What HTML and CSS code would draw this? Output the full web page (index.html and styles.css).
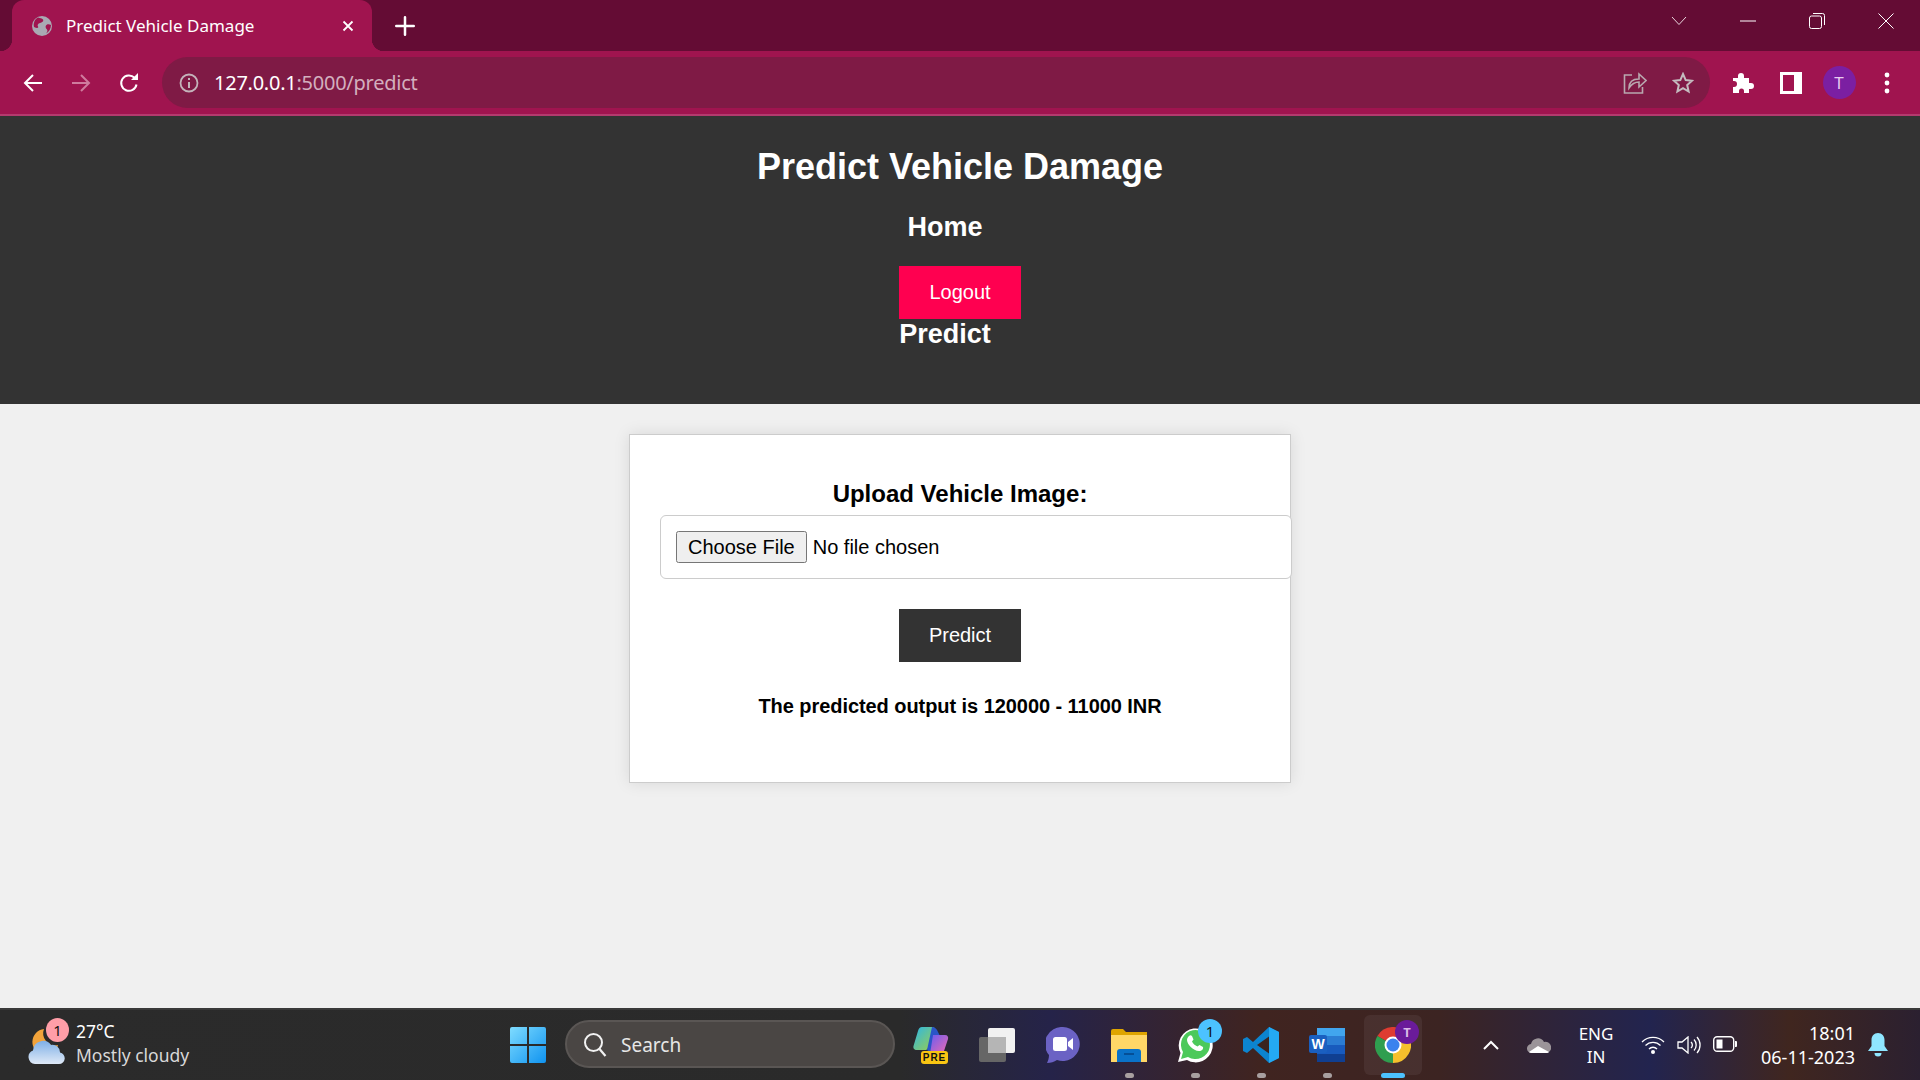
FILE: index.html
```html
<!DOCTYPE html>
<html lang="en">
<head>
    <meta charset="UTF-8">
    <meta name="viewport" content="width=device-width, initial-scale=1.0">
    <title>Predict Vehicle Damage</title>
    <link rel="stylesheet" href="styles.css">
</head>
<body>
    <!-- browser chrome -->
    <div class="tabstrip">
        <div class="tab">
            <svg class="favicon" viewBox="0 0 20 20"><circle cx="10" cy="10" r="10" fill="#a9a9b3"/><path d="M6 1.500c2 1 4 .5 5 2s-1 3-3 3.500-3 2-2 3.500-1 2-4 .5c-1-4 1-8 4-9.500zM19 9c-2-1-4-1-5 .5s0 3 1 4 0 3-1 4c3-1.500 5-5 5-8.500z" fill="#a0144f"/></svg>
            <span class="tab-title">Predict Vehicle Damage</span>
            <svg class="tab-close" viewBox="0 0 12 12"><path d="M1.500 1.500l9 9M10.500 1.500l-9 9" stroke="#fff" stroke-width="1.800"/></svg>
        </div>
        <svg class="new-tab" viewBox="0 0 16 16"><path d="M8 1v14M1 8h14" stroke="#fff" stroke-width="2" stroke-linecap="round"/></svg>
        <div class="window-controls">
            <div class="win-btn"><svg width="16" height="10" viewBox="0 0 16 10"><path d="M1 1l7 7.500L15 1" fill="none" stroke="#e9d5dd"/></svg></div>
            <div class="win-btn"><svg width="16" height="2" viewBox="0 0 16 2"><path d="M0 1h16" stroke="#fff"/></svg></div>
            <div class="win-btn"><svg width="16" height="16" viewBox="0 0 16 16"><rect x=".5" y="3" width="12" height="12.500" rx="2" fill="none" stroke="#fff"/><path d="M4 .5h9.500a2 2 0 0 1 2 2V12" fill="none" stroke="#fff"/></svg></div>
            <div class="win-btn"><svg width="16" height="16" viewBox="0 0 16 16"><path d="M.5.500l15 15M15.500.500l-15 15" stroke="#fff"/></svg></div>
        </div>
    </div>

    <div class="toolbar">
        <div class="tool"><svg width="20" height="20" viewBox="0 0 20 20"><path d="M19 10H2M10 2l-8 8 8 8" fill="none" stroke="#fff" stroke-width="2"/></svg></div>
        <div class="tool"><svg width="20" height="20" viewBox="0 0 20 20"><path d="M1 10h17M10 2l8 8-8 8" fill="none" stroke="#cf7b9e" stroke-width="2"/></svg></div>
        <div class="tool"><svg width="20" height="20" viewBox="0 0 20 20"><path d="M17.500 11.500a7.700 7.700 0 1 1-2-6.700" fill="none" stroke="#fff" stroke-width="2"/><path d="M12 7h7V0z" fill="#fff"/></svg></div>
        <div class="omnibox">
            <svg class="info" width="20" height="20" viewBox="0 0 20 20"><circle cx="10" cy="10" r="8.500" fill="none" stroke="#c4b3ba" stroke-width="1.800"/><path d="M10 9v6M10 5v2" stroke="#c4b3ba" stroke-width="2"/></svg>
            <span class="url"><span class="url-host">127.0.0.1</span>:5000/predict</span>
            <div class="tool tool-right"><svg width="24" height="22" viewBox="0 0 24 22"><path d="M9 3H1.500v18h18v-6" fill="none" stroke="#b9a8af" stroke-width="1.600"/><path d="M6 16c0-6 4-9 10-9V2l7 6.500-7 6.500v-5c-4 0-7 1.500-10 6z" fill="none" stroke="#b9a8af" stroke-width="1.600"/></svg></div>
            <div class="tool tool-right"><svg width="22" height="22" viewBox="0 0 22 22"><path d="M11 2l2.700 6.100 6.300.6-4.800 4.300 1.400 6.500L11 16.100l-5.600 3.400L6.800 13 2 8.700l6.300-.6z" fill="none" stroke="#c4bcbf" stroke-width="2"/></svg></div>
        </div>
        <div class="tool"><svg width="22" height="22" viewBox="0 0 22 22"><path d="M1 6h5V4a3 3 0 0 1 6 0v2h5v5h2a3 3 0 0 1 0 6h-2v4h-5v-2a2.500 2.500 0 0 0-5 0v2H1v-6h1a3 3 0 0 0 0-6H1z" fill="#fff"/></svg></div>
        <div class="tool"><svg width="22" height="22" viewBox="0 0 22 22"><path d="M0 0h22v22H0z" fill="#fff"/><path d="M3 3h11v16H3z" fill="#a0144f"/></svg></div>
        <div class="tool"><div class="avatar">T</div></div>
        <div class="tool"><svg width="6" height="22" viewBox="0 0 6 22"><circle cx="3" cy="3" r="2.400" fill="#fff"/><circle cx="3" cy="11" r="2.400" fill="#fff"/><circle cx="3" cy="19" r="2.400" fill="#fff"/></svg></div>
    </div>

    <!-- page -->
    <header class="site-header">
        <h1>Predict Vehicle Damage</h1>
        <nav class="site-nav">
            <a class="nav-link nav-home" href="#">Home</a>
            <a class="btn btn-logout" href="#">Logout</a>
            <a class="nav-link nav-predict" href="#">Predict</a>
        </nav>
    </header>

    <main class="page">
        <form class="card">
            <label class="card-label" for="image">Upload Vehicle Image:</label>
            <input class="file-input" type="file" id="image">
            <button class="btn btn-predict" type="button">Predict</button>
            <p class="result">The predicted output is 120000 - 11000 INR</p>
        </form>
    </main>

    <!-- windows taskbar -->
    <footer class="taskbar">
        <div class="weather">
            <div class="weather-icon">
                <svg width="38" height="36" viewBox="0 0 38 36"><path d="M16 0a13 13 0 1 0 14 16A12 12 0 0 1 16 0z" fill="#f2a33a"/><defs><linearGradient id="cloud" x1="0" y1="0" x2="0" y2="1"><stop offset="0" stop-color="#7fb0e6"/><stop offset="1" stop-color="#dfe9f7"/></linearGradient></defs><path d="M7 35a7 7 0 0 1-2-13.500A10 10 0 0 1 23 16a7.500 7.500 0 0 1 9 7.500A5.800 5.800 0 0 1 31 35z" fill="url(#cloud)"/></svg>
                <span class="weather-badge">1</span>
            </div>
            <div class="weather-text">
                <div class="weather-temp">27°C</div>
                <div class="weather-desc">Mostly cloudy</div>
            </div>
        </div>

        <div class="task-icons">
            <svg class="win-logo" width="36" height="36" viewBox="0 0 36 36"><defs><linearGradient id="win" x1="0" y1="0" x2="1" y2="1"><stop offset="0" stop-color="#7fdcff"/><stop offset="1" stop-color="#0f93f0"/></linearGradient></defs><path d="M0 2a2 2 0 0 1 2-2h15v17H0zM19 0h15a2 2 0 0 1 2 2v15H19zM0 19h17v17H2a2 2 0 0 1-2-2zM19 19h17v15a2 2 0 0 1-2 2H19z" fill="url(#win)"/></svg>
            <div class="search">
                <svg width="24" height="26" viewBox="0 0 24 26"><circle cx="10.500" cy="10.500" r="8.500" fill="none" stroke="#f2f2f2" stroke-width="2"/><path d="M16.500 17l6 7" stroke="#f2f2f2" stroke-width="2.200"/></svg>
                <span>Search</span>
            </div>
            <div class="apps">
                <div class="app">
                    <svg width="36" height="38" viewBox="0 0 36 38"><defs><linearGradient id="cop1" x1="0" y1="0" x2="1" y2="1"><stop offset="0" stop-color="#2bb6e8"/><stop offset="1" stop-color="#9ccf4a"/></linearGradient><linearGradient id="cop2" x1="0" y1="0" x2="1" y2="1"><stop offset="0" stop-color="#6a5df0"/><stop offset="1" stop-color="#f06bb0"/></linearGradient></defs><path d="M9 1h10c2 0 3 1 2 3l-6 18c-.5 1.500-1.500 2-3 2H4c-3 0-4-2-3.500-4L5 5c.7-2.500 2-4 4-4z" fill="url(#cop1)"/><path d="M19 1c3 0 5 2 6 5l2 4-10 16-3-2z" fill="#2a55c8"/><path d="M20 9h12c2.500 0 3.500 2 3 4l-4 12c-.7 2-2 3-4 3H17z" fill="url(#cop2)"/><rect x="8" y="25" width="27" height="13" rx="3" fill="#f9c513"/><text x="21.500" y="35" text-anchor="middle" class="pre-text">PRE</text></svg>
                </div>
                <div class="app">
                    <svg width="36" height="34" viewBox="0 0 36 34"><rect x="0" y="9" width="27" height="25" rx="2" fill="#666"/><rect x="9" y="0" width="27" height="25" rx="2" fill="#f1f1f1"/><rect x="9" y="9" width="18" height="16" fill="#b5b5b5"/></svg>
                </div>
                <div class="app">
                    <svg width="34" height="36" viewBox="0 0 34 36"><path d="M17 0a17 17 0 1 1-6 33c-3 2-6 3-10 3 1-2 2-5 2-8A17 17 0 0 1 17 0z" fill="#6b62c4"/><rect x="7" y="10" width="14" height="14" rx="2.500" fill="#fff"/><path d="M22 15l5-4v12l-5-4z" fill="#fff"/></svg>
                </div>
                <div class="app app-open">
                    <svg width="36" height="33" viewBox="0 0 36 33"><path d="M0 2a2 2 0 0 1 2-2h10l3 3h21v12H0z" fill="#dea400"/><path d="M0 6h36v27H0z" fill="#ffd767"/><path d="M6 33v-10a3 3 0 0 1 3-3h18a3 3 0 0 1 3 3v10z" fill="#0a72c8"/><path d="M13 25h10" stroke="#05478a" stroke-width="1.600"/></svg>
                </div>
                <div class="app app-open">
                    <svg width="36" height="36" viewBox="0 0 36 36"><path d="M1 35l2.500-9A17 17 0 1 1 10 33z" fill="#fff"/><path d="M4 32l2-7A14.500 14.500 0 1 1 11 30z" fill="#4cc95a"/><path d="M12 9c1-1 2-1 3 0l1.500 3.500-1.500 2c1 2 3 4 5.500 5l2-1.500 3.500 2c.5 2-1 4-4 4-6 0-12-7-12-11 0-2 1-3 2-4z" fill="#fff"/></svg>
                    <span class="app-badge">1</span>
                </div>
                <div class="app app-open">
                    <svg width="36" height="36" viewBox="0 0 36 36"><path d="M26 0l10 5v26l-10 5-16-15-6 5-4-2v-12l4-2 6 5z" fill="#0c84cf"/><path d="M26 0l10 5v26l-10 5z" fill="#24a9f2"/><path d="M26 9.500L14 18l12 8.500z" fill="#3a2420"/></svg>
                </div>
                <div class="app app-open">
                    <svg width="36" height="34" viewBox="0 0 36 34"><rect x="8" y="0" width="28" height="34" rx="2" fill="#2b7cd3"/><rect x="8" y="0" width="28" height="8" fill="#41a5ee"/><rect x="8" y="17" width="28" height="9" fill="#185abd"/><rect x="8" y="26" width="28" height="8" fill="#103f91"/><rect x="0" y="7" width="18" height="18" rx="2" fill="#1a5fc0"/><text x="9" y="21" text-anchor="middle" class="word-text">W</text></svg>
                </div>
                <div class="app app-active">
                    <svg width="36" height="36" viewBox="0 0 36 36"><path d="M18 18L33.600 9A18 18 0 0 0 2.400 9z" fill="#de3b31"/><path d="M18 18L33.600 9A18 18 0 0 1 18 36z" fill="#f5c02c"/><path d="M18 18L18 36A18 18 0 0 1 2.400 9z" fill="#2f9e4f"/><circle cx="18" cy="18" r="8.500" fill="#fff"/><circle cx="18" cy="18" r="6.500" fill="#3b82ee"/></svg>
                    <span class="chrome-badge">T</span>
                </div>
            </div>
        </div>

        <div class="tray">
            <svg class="tray-chevron" width="16" height="10" viewBox="0 0 16 10"><path d="M1 9l7-7 7 7" fill="none" stroke="#fff" stroke-width="2"/></svg>
            <svg class="tray-cloud" width="24" height="16" viewBox="0 0 24 16"><path d="M5 16a4.500 4.500 0 0 1-1-9 7 7 0 0 1 13-2 5.500 5.500 0 0 1 3 11z" fill="#9b9499"/><path d="M5 16a4 4 0 0 1-3-1l9-6 11 6a3 3 0 0 1-2 1z" fill="#fff"/></svg>
            <div class="lang"><div>ENG</div><div>IN</div></div>
            <div class="status-icons">
                <svg width="24" height="18" viewBox="0 0 24 18"><path d="M1 6a15.500 15.500 0 0 1 22 0M4.500 9.500a10.500 10.500 0 0 1 15 0M8 13a5.500 5.500 0 0 1 8 0" fill="none" stroke="#fff" stroke-width="1.300"/><circle cx="12" cy="16" r="2" fill="#fff"/></svg>
                <svg width="24" height="18" viewBox="0 0 24 18"><path d="M1 6h4l6-5v16l-6-5H1z" fill="none" stroke="#fff" stroke-width="1.300"/><path d="M14 6a4 4 0 0 1 0 6M17 3.500a8 8 0 0 1 0 11M20 1a12 12 0 0 1 0 16" fill="none" stroke="#fff" stroke-width="1.300"/></svg>
                <svg width="24" height="16" viewBox="0 0 24 16"><rect x=".7" y=".7" width="20" height="14.600" rx="3.500" fill="none" stroke="#fff" stroke-width="1.400"/><rect x="3.500" y="3.500" width="6" height="9" fill="#fff"/><path d="M22 5h1a1 1 0 0 1 1 1v4a1 1 0 0 1-1 1h-1z" fill="#fff"/></svg>
            </div>
            <div class="clock"><div>18:01</div><div>06-11-2023</div></div>
            <svg class="bell" width="20" height="24" viewBox="0 0 20 24"><path d="M10 0c4 0 6.500 3 6.500 7v6l3.500 5H0l3.500-5V7C3.500 3 6 0 10 0z" fill="#8fe6ff"/><path d="M6.500 20h7a3.500 3.500 0 0 1-7 0z" fill="#8fe6ff"/></svg>
        </div>
    </footer>
</body>
</html>
```

FILE: styles.css
```css
* {
    margin: 0;
    padding: 0;
    box-sizing: border-box;
}

body {
    height: 100vh;
    display: flex;
    flex-direction: column;
    overflow: hidden;
    background-color: #f0f0f0;
    font-family: "Liberation Sans", Arial, sans-serif;
}

/* browser chrome */
.tabstrip {
    height: 51px;
    flex: none;
    display: flex;
    align-items: flex-start;
    padding-left: 12px;
    background-color: #640c34;
    font-family: "Noto Sans", sans-serif;
}

.tab {
    position: relative;
    width: 360px;
    height: 51px;
    display: flex;
    align-items: center;
    padding: 0 18px 0 20px;
    background-color: #a0144f;
    border-radius: 12px 12px 0 0;
    color: #fff;
}

.tab::before,
.tab::after {
    content: "";
    position: absolute;
    bottom: 0;
    width: 12px;
    height: 12px;
}

.tab::before {
    left: -12px;
    background: radial-gradient(circle at 0 0, #640c34 12px, #a0144f 12.500px);
}

.tab::after {
    right: -12px;
    background: radial-gradient(circle at 100% 0, #640c34 12px, #a0144f 12.500px);
}

.favicon {
    width: 20px;
    height: 20px;
    flex: none;
}

.tab-title {
    margin-left: 14px;
    font-size: 17px;
}

.tab-close {
    width: 12px;
    height: 12px;
    margin-left: auto;
}

.new-tab {
    width: 20px;
    height: 20px;
    margin: 16px 0 0 23px;
}

.window-controls {
    margin-left: auto;
    display: flex;
    align-items: center;
    height: 42px;
}

.win-btn {
    width: 69px;
    height: 42px;
    display: flex;
    align-items: center;
    justify-content: center;
}

.toolbar {
    height: 65px;
    flex: none;
    display: flex;
    align-items: center;
    padding: 0 9px;
    background-color: #a0144f;
    border-bottom: 2px solid #b43a6e;
    font-family: "Noto Sans", sans-serif;
}

.tool {
    width: 48px;
    height: 48px;
    flex: none;
    display: flex;
    align-items: center;
    justify-content: center;
}

.omnibox {
    flex: 1;
    height: 51px;
    margin: 0 9px;
    display: flex;
    align-items: center;
    padding: 0 3px 0 17px;
    background-color: #7f1a45;
    border-radius: 26px;
}

.info {
    flex: none;
}

.url {
    margin: 0 auto 0 15px;
    font-size: 20px;
    letter-spacing: -0.25px;
    color: #d3afbe;
}

.url-host {
    color: #fff;
}

.avatar {
    width: 33px;
    height: 33px;
    border-radius: 50%;
    background-color: #7b1fa2;
    color: #e8cdf0;
    font-size: 17px;
    line-height: 33px;
    text-align: center;
}

/* page */
.site-header {
    flex: none;
    padding: 30px 0 56px;
    background-color: #333;
    color: #fff;
    text-align: center;
}

.site-header h1 {
    font-size: 36px;
    line-height: 41px;
}

.site-nav {
    margin-top: 26px;
    display: flex;
    flex-direction: column;
    align-items: center;
}

.nav-link {
    margin-right: 30px;
    color: #fff;
    font-size: 27px;
    font-weight: bold;
    line-height: 28px;
    text-decoration: none;
}

.nav-home {
    margin-bottom: 25px;
}

.nav-predict {
    margin-top: 1px;
}

.btn {
    display: block;
    width: 122px;
    height: 53px;
    border: none;
    color: #fff;
    font-family: inherit;
    font-size: 20px;
    line-height: 53px;
    text-align: center;
    text-decoration: none;
}

.btn-logout {
    background-color: #ff0050;
}

.btn-predict {
    margin: 30px auto 0;
    background-color: #333;
}

.page {
    flex: 1;
    display: flex;
    flex-direction: column;
    align-items: center;
    padding-top: 30px;
}

.card {
    width: 662px;
    height: 349px;
    padding: 45px 30px 0;
    background-color: #fff;
    border: 1px solid #ccc;
    box-shadow: 0 0 15px rgba(0, 0, 0, 0.1);
    text-align: center;
}

.card-label {
    display: block;
    font-size: 24px;
    font-weight: bold;
    line-height: 28px;
}

.file-input {
    display: block;
    width: 632px;
    height: 64px;
    margin-top: 7px;
    padding: 15px;
    background-color: #fff;
    border: 1px solid #ccc;
    border-radius: 6px;
    font-family: inherit;
    font-size: 20px;
}

.file-input::file-selector-button {
    height: 32px;
    margin-right: 6px;
    padding: 0 10px;
    font-family: inherit;
    font-size: 20px;
}

.result {
    margin-top: 33px;
    font-size: 20px;
    font-weight: bold;
    letter-spacing: -0.06px;
    line-height: 23px;
}

/* windows taskbar */
.taskbar {
    height: 72px;
    flex: none;
    display: flex;
    align-items: center;
    border-top: 2px solid #3a3a3a;
    background: linear-gradient(90deg, #2b2b2b 0, #2a2a2a 900px, #252349 1050px, #402420 1260px, #3c2422 1440px, #22244f 1650px, #40261f 1790px, #2b2030 1920px);
    color: #fff;
    font-family: "Noto Sans", sans-serif;
}

.weather {
    width: 510px;
    flex: none;
    display: flex;
    align-items: center;
    padding-left: 28px;
}

.weather-icon {
    position: relative;
    width: 38px;
    height: 36px;
    margin-top: 4px;
}

.weather-badge {
    position: absolute;
    top: -11px;
    left: 18px;
    width: 23px;
    height: 24px;
    border-radius: 50%;
    background-color: #ff9ea8;
    color: #111;
    font-size: 15px;
    line-height: 24px;
    text-align: center;
}

.weather-text {
    margin: -4px 0 0 10px;
    font-size: 17.5px;
    line-height: 24px;
}

.weather-desc {
    color: #d8d8d8;
}

.task-icons {
    display: flex;
    align-items: center;
}

.win-logo {
    flex: none;
}

.search {
    width: 330px;
    height: 48px;
    margin: -2px 0 0 19px;
    display: flex;
    align-items: center;
    padding: 1px 0 0 16px;
    background-color: #4a4644;
    border: 2px solid #5a5654;
    border-radius: 24px;
    color: #e6e6e6;
    font-size: 19px;
}

.search span {
    margin: 1px 0 0 14px;
}

.apps {
    display: flex;
    margin-left: 3px;
}

.app {
    position: relative;
    width: 66px;
    height: 60px;
    flex: none;
    display: flex;
    align-items: center;
    justify-content: center;
}

.app-open::after,
.app-active::after {
    content: "";
    position: absolute;
    bottom: -3px;
    left: 50%;
    width: 9px;
    height: 5px;
    margin-left: -4px;
    border-radius: 3px;
    background-color: #a8a0a0;
}

.app-active {
    width: 58px;
    margin-left: 4px;
    background-color: rgba(255, 255, 255, 0.06);
    border-radius: 6px;
}

.app-active::after {
    width: 24px;
    margin-left: -12px;
    background-color: #4cc2ff;
}

.app-badge {
    position: absolute;
    top: 4px;
    left: 36px;
    width: 24px;
    height: 24px;
    border-radius: 50%;
    background-color: #4cc2ff;
    color: #111;
    font-size: 15px;
    line-height: 24px;
    text-align: center;
}

.chrome-badge {
    position: absolute;
    top: 5px;
    left: 31px;
    width: 24px;
    height: 24px;
    border-radius: 50%;
    background-color: #6a1b9a;
    color: #d9b8e6;
    font-size: 13px;
    font-weight: bold;
    line-height: 24px;
    text-align: center;
}

.pre-text {
    fill: #111;
    font-family: "Liberation Sans", sans-serif;
    font-size: 10px;
    font-weight: bold;
    letter-spacing: 1px;
}

.word-text {
    fill: #fff;
    font-family: "Liberation Sans", sans-serif;
    font-size: 14px;
    font-weight: bold;
}

.tray {
    flex: 1;
    display: flex;
    align-items: center;
    padding-left: 61px;
}

.tray-cloud {
    margin-left: 28px;
}

.lang {
    width: 66px;
    margin-left: 12px;
    font-size: 17px;
    line-height: 23px;
    text-align: center;
}

.status-icons {
    display: flex;
    gap: 12px;
    margin-left: 12px;
}

.clock {
    width: 118px;
    font-size: 18px;
    line-height: 24px;
    text-align: right;
}

.bell {
    margin-left: 13px;
}
```
